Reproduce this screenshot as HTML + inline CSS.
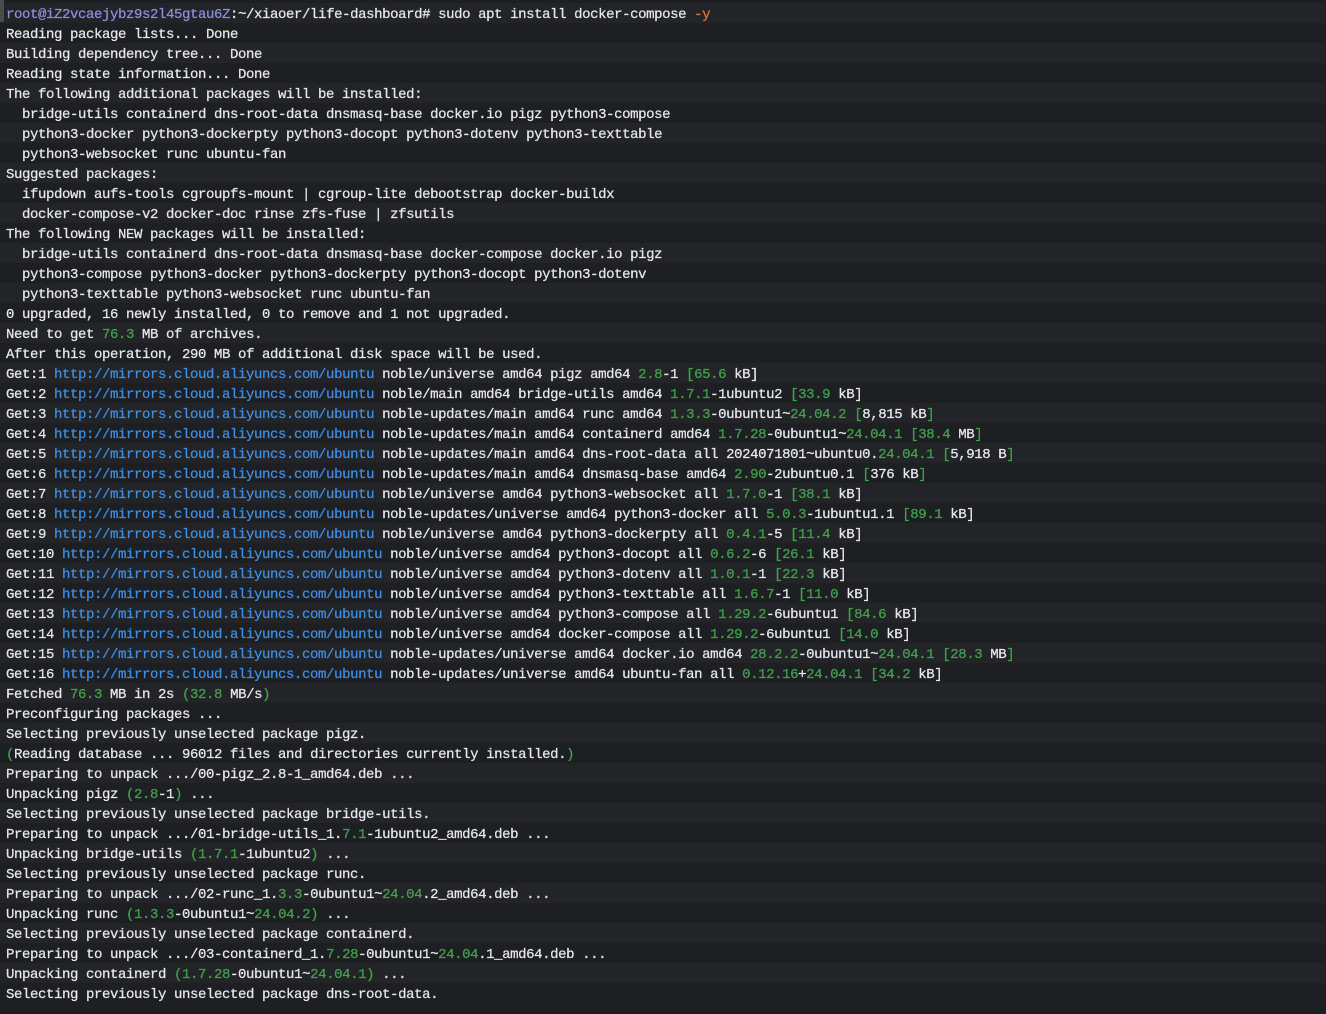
<!DOCTYPE html>
<html><head><meta charset="utf-8"><style>
html,body{margin:0;padding:0;background:#1e1f22;width:1326px;height:1014px;overflow:hidden}
body{position:relative}
.gut{position:absolute;left:0;top:0;width:4px;height:22px;background:#4a4b4e}
pre{margin:0;position:absolute;left:6px;top:5px;font-family:"Liberation Mono",monospace;font-size:14px;letter-spacing:-0.4px;line-height:20px;color:#e6e8ec;white-space:pre;-webkit-text-stroke:0.25px #e6e8ec}
.g{color:#3fa34a;-webkit-text-stroke-color:#3fa34a}.b{color:#3d8fe6;-webkit-text-stroke-color:#3d8fe6}.p{color:#8d8ee0;-webkit-text-stroke-color:#8d8ee0}.o{color:#e0763a;-webkit-text-stroke-color:#e0763a}
.bands{position:absolute;left:0;right:0;top:3px}
.bands div{height:20px}
.bands div:nth-child(odd){background:#232427}
</style></head><body>
<div class="bands"><div></div><div></div><div></div><div></div><div></div><div></div><div></div><div></div><div></div><div></div><div></div><div></div><div></div><div></div><div></div><div></div><div></div><div></div><div></div><div></div><div></div><div></div><div></div><div></div><div></div><div></div><div></div><div></div><div></div><div></div><div></div><div></div><div></div><div></div><div></div><div></div><div></div><div></div><div></div><div></div><div></div><div></div><div></div><div></div><div></div><div></div><div></div><div></div><div></div><div></div></div>
<div class="gut"></div>
<pre><span class="p">root@iZ2vcaejybz9s2l45gtau6Z</span>:~/xiaoer/life-dashboard# sudo apt install docker-compose <span class="o">-y</span>
Reading package lists... Done
Building dependency tree... Done
Reading state information... Done
The following additional packages will be installed:
  bridge-utils containerd dns-root-data dnsmasq-base docker.io pigz python3-compose
  python3-docker python3-dockerpty python3-docopt python3-dotenv python3-texttable
  python3-websocket runc ubuntu-fan
Suggested packages:
  ifupdown aufs-tools cgroupfs-mount | cgroup-lite debootstrap docker-buildx
  docker-compose-v2 docker-doc rinse zfs-fuse | zfsutils
The following NEW packages will be installed:
  bridge-utils containerd dns-root-data dnsmasq-base docker-compose docker.io pigz
  python3-compose python3-docker python3-dockerpty python3-docopt python3-dotenv
  python3-texttable python3-websocket runc ubuntu-fan
0 upgraded, 16 newly installed, 0 to remove and 1 not upgraded.
Need to get <span class="g">76.3</span> MB of archives.
After this operation, 290 MB of additional disk space will be used.
Get:1 <span class="b">http://mirrors.cloud.aliyuncs.com/ubuntu</span> noble/universe amd64 pigz amd64 <span class="g">2.8</span>-1 <span class="g">[65.6</span> kB]
Get:2 <span class="b">http://mirrors.cloud.aliyuncs.com/ubuntu</span> noble/main amd64 bridge-utils amd64 <span class="g">1.7.1</span>-1ubuntu2 <span class="g">[33.9</span> kB]
Get:3 <span class="b">http://mirrors.cloud.aliyuncs.com/ubuntu</span> noble-updates/main amd64 runc amd64 <span class="g">1.3.3</span>-0ubuntu1~<span class="g">24.04.2</span> <span class="g">[</span>8,815 kB<span class="g">]</span>
Get:4 <span class="b">http://mirrors.cloud.aliyuncs.com/ubuntu</span> noble-updates/main amd64 containerd amd64 <span class="g">1.7.28</span>-0ubuntu1~<span class="g">24.04.1</span> <span class="g">[38.4</span> MB<span class="g">]</span>
Get:5 <span class="b">http://mirrors.cloud.aliyuncs.com/ubuntu</span> noble-updates/main amd64 dns-root-data all 2024071801~ubuntu0.<span class="g">24.04.1</span> <span class="g">[</span>5,918 B<span class="g">]</span>
Get:6 <span class="b">http://mirrors.cloud.aliyuncs.com/ubuntu</span> noble-updates/main amd64 dnsmasq-base amd64 <span class="g">2.90</span>-2ubuntu0.1 <span class="g">[</span>376 kB<span class="g">]</span>
Get:7 <span class="b">http://mirrors.cloud.aliyuncs.com/ubuntu</span> noble/universe amd64 python3-websocket all <span class="g">1.7.0</span>-1 <span class="g">[38.1</span> kB]
Get:8 <span class="b">http://mirrors.cloud.aliyuncs.com/ubuntu</span> noble-updates/universe amd64 python3-docker all <span class="g">5.0.3</span>-1ubuntu1.1 <span class="g">[89.1</span> kB]
Get:9 <span class="b">http://mirrors.cloud.aliyuncs.com/ubuntu</span> noble/universe amd64 python3-dockerpty all <span class="g">0.4.1</span>-5 <span class="g">[11.4</span> kB]
Get:10 <span class="b">http://mirrors.cloud.aliyuncs.com/ubuntu</span> noble/universe amd64 python3-docopt all <span class="g">0.6.2</span>-6 <span class="g">[26.1</span> kB]
Get:11 <span class="b">http://mirrors.cloud.aliyuncs.com/ubuntu</span> noble/universe amd64 python3-dotenv all <span class="g">1.0.1</span>-1 <span class="g">[22.3</span> kB]
Get:12 <span class="b">http://mirrors.cloud.aliyuncs.com/ubuntu</span> noble/universe amd64 python3-texttable all <span class="g">1.6.7</span>-1 <span class="g">[11.0</span> kB]
Get:13 <span class="b">http://mirrors.cloud.aliyuncs.com/ubuntu</span> noble/universe amd64 python3-compose all <span class="g">1.29.2</span>-6ubuntu1 <span class="g">[84.6</span> kB]
Get:14 <span class="b">http://mirrors.cloud.aliyuncs.com/ubuntu</span> noble/universe amd64 docker-compose all <span class="g">1.29.2</span>-6ubuntu1 <span class="g">[14.0</span> kB]
Get:15 <span class="b">http://mirrors.cloud.aliyuncs.com/ubuntu</span> noble-updates/universe amd64 docker.io amd64 <span class="g">28.2.2</span>-0ubuntu1~<span class="g">24.04.1</span> <span class="g">[28.3</span> MB<span class="g">]</span>
Get:16 <span class="b">http://mirrors.cloud.aliyuncs.com/ubuntu</span> noble-updates/universe amd64 ubuntu-fan all <span class="g">0.12.16</span>+<span class="g">24.04.1</span> <span class="g">[34.2</span> kB]
Fetched <span class="g">76.3</span> MB in 2s <span class="g">(32.8</span> MB/s<span class="g">)</span>
Preconfiguring packages ...
Selecting previously unselected package pigz.
<span class="g">(</span>Reading database ... 96012 files and directories currently installed.<span class="g">)</span>
Preparing to unpack .../00-pigz_2.8-1_amd64.deb ...
Unpacking pigz <span class="g">(2.8</span>-1<span class="g">)</span> ...
Selecting previously unselected package bridge-utils.
Preparing to unpack .../01-bridge-utils_1.<span class="g">7.1</span>-1ubuntu2_amd64.deb ...
Unpacking bridge-utils <span class="g">(1.7.1</span>-1ubuntu2<span class="g">)</span> ...
Selecting previously unselected package runc.
Preparing to unpack .../02-runc_1.<span class="g">3.3</span>-0ubuntu1~<span class="g">24.04</span>.2_amd64.deb ...
Unpacking runc <span class="g">(1.3.3</span>-0ubuntu1~<span class="g">24.04.2)</span> ...
Selecting previously unselected package containerd.
Preparing to unpack .../03-containerd_1.<span class="g">7.28</span>-0ubuntu1~<span class="g">24.04</span>.1_amd64.deb ...
Unpacking containerd <span class="g">(1.7.28</span>-0ubuntu1~<span class="g">24.04.1)</span> ...
Selecting previously unselected package dns-root-data.</pre>
</body></html>
